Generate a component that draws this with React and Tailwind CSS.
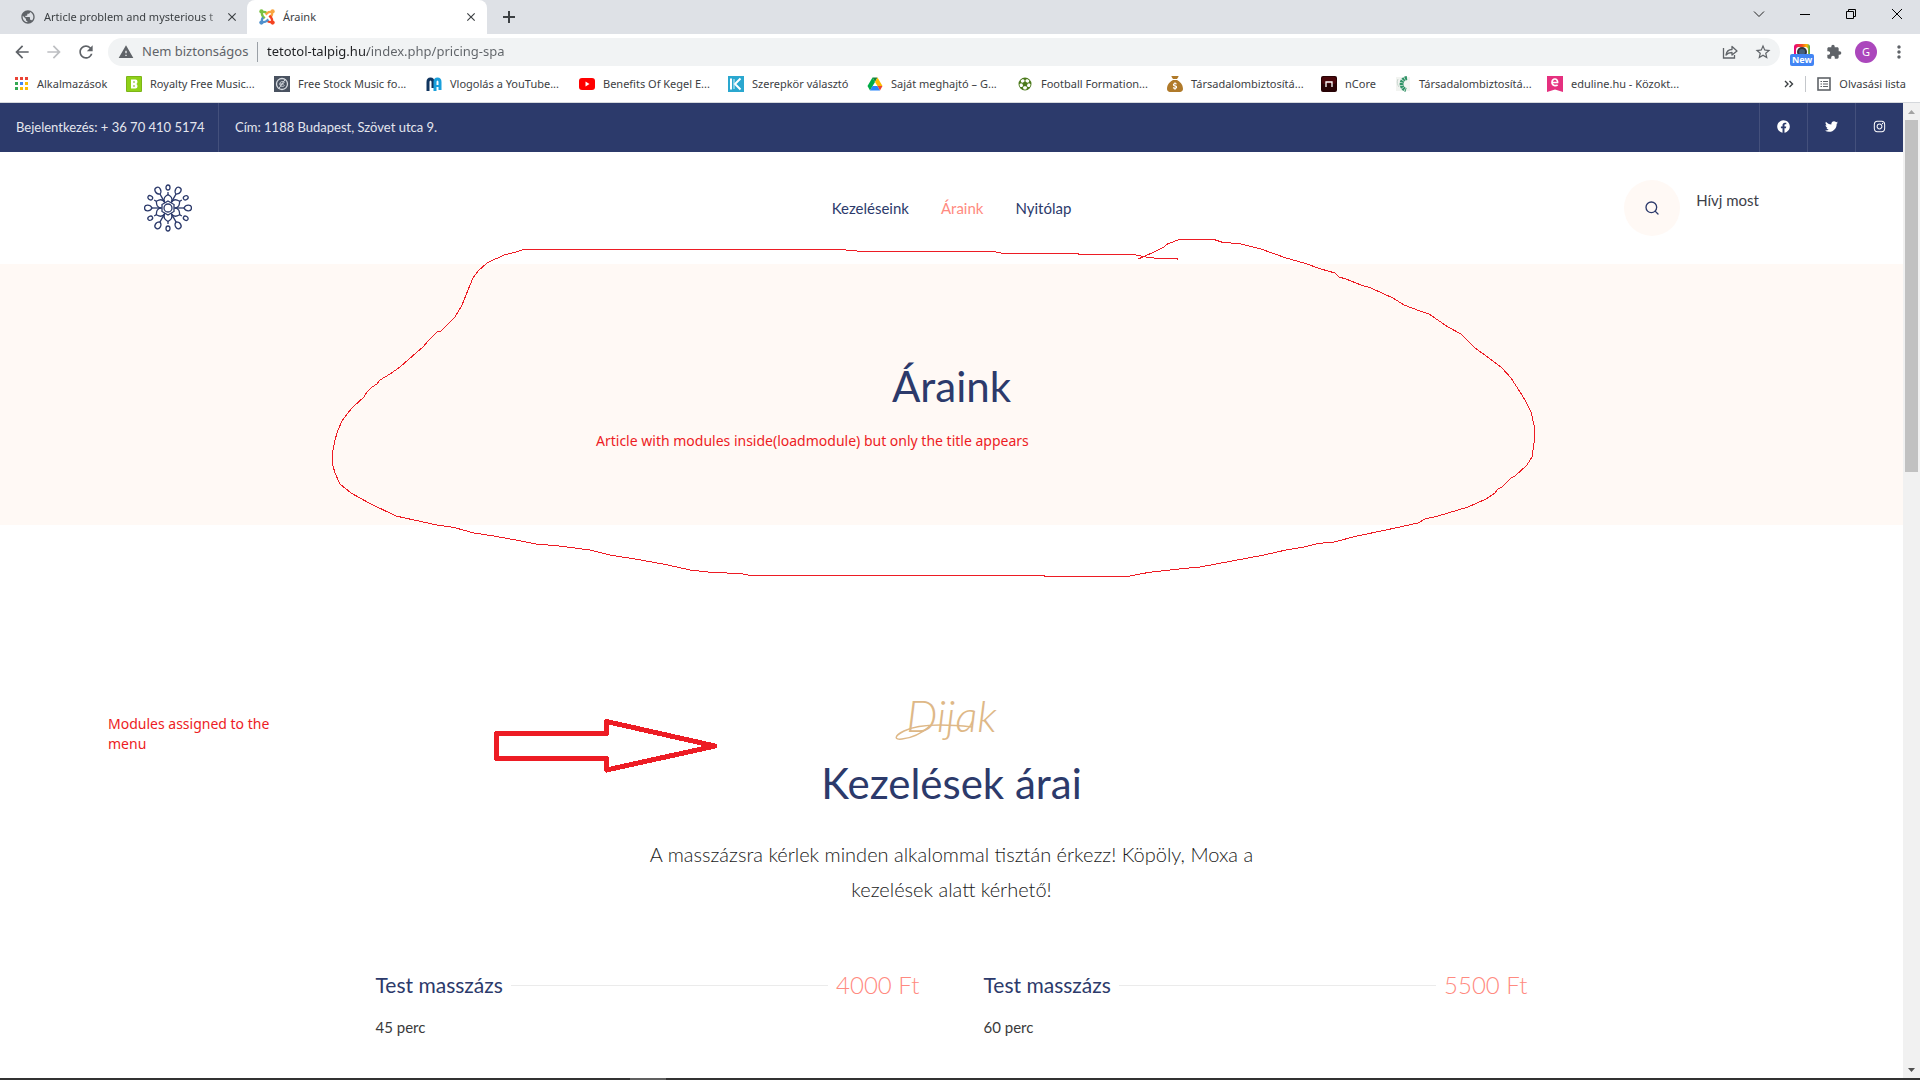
import React from "react";
import {
  MdArrowBack,
  MdArrowForward,
  MdClose,
  MdExtension,
  MdMoreVert,
  MdPublic,
  MdRefresh,
  MdStarBorder,
  MdWarning,
} from "react-icons/md";
import { FaFacebook, FaInstagram, FaTwitter } from "react-icons/fa";
import { FaSackDollar } from "react-icons/fa6";
import { PiSoccerBallFill } from "react-icons/pi";
import { Search } from "lucide-react";

const JoomlaIcon = () => (
  <svg viewBox="0 0 24 24" className="size-4" fill="none" strokeWidth="3.6">
    {[
      ["#7ac143", 0],
      ["#f9a541", 90],
      ["#f44321", 180],
      ["#5091cd", 270],
    ].map(([color, angle]) => (
      <g key={color} stroke={color} transform={`rotate(${angle} 12 12)`}>
        <circle cx="3.6" cy="3.6" r="3.2" fill={color} stroke="none" />
        <path d="M4.5 4 C4 7.500 4 9.500 6 11.500 L8.500 14" />
        <path d="M4 4.500 C7.500 4 9.500 4 11.500 6" />
      </g>
    ))}
  </svg>
);

const AppsIcon = () => (
  <svg viewBox="0 0 14 16" className="h-4 w-[14px]">
    {["#ea4335", "#ea4335", "#ea4335", "#34a853", "#4285f4", "#fbbc05", "#34a853", "#fbbc05", "#fbbc05"].map(
      (color, i) => (
        <rect key={i} x={(i % 3) * 5} y={1 + Math.floor(i / 3) * 5} width="3" height="3" fill={color} />
      )
    )}
  </svg>
);

const BensoundIcon = () => (
  <svg viewBox="0 0 16 16" className="size-4">
    <rect width="16" height="16" rx="1" fill="#7cb518" />
    <rect x="1" y="1" width="14" height="14" fill="#8fd118" />
    <path d="M5 3.500 h4.500 q2 0 2 2.200 q0 1.800 -1.200 2.300 q1.200 .5 1.200 2.300 q0 2.200 -2 2.200 H5z" fill="#fff" />
    <path d="M7 6 h2 M7 10 h2" stroke="#7cb518" strokeWidth="1.2" />
  </svg>
);

const StockMusicIcon = () => (
  <svg viewBox="0 0 16 16" className="size-4" fill="none" stroke="#d5dae0">
    <rect width="16" height="16" fill="#495260" stroke="none" />
    <circle cx="8" cy="8" r="5.5" strokeWidth="1.3" />
    <path d="M10.500 6.500 C9 4.800 5.800 5.500 5.800 8 C5.800 10.500 9 11 10.500 9.500 M11.500 3 L4.500 13 M6 8 h4" />
  </svg>
);

const VlogIcon = () => (
  <svg viewBox="0 0 16 16" className="size-4" fill="none" strokeWidth="3">
    <path d="M2 15 V6 Q2 3 4.500 3 Q7 3 7 6 V12" stroke="#10355f" />
    <path d="M9 15 V6 Q9 3 11.500 3 Q14 3 14 6 V14" stroke="#19a0dc" />
    <path d="M9 10 h5" stroke="#19a0dc" strokeWidth="2" />
  </svg>
);

const YoutubeIcon = () => (
  <svg viewBox="0 0 16 16" className="size-4">
    <rect y="2" width="16" height="12" rx="3" fill="#f00" />
    <path d="M6.500 5.500 L10.500 8 L6.500 10.500z" fill="#fff" />
  </svg>
);

const KIcon = () => (
  <svg viewBox="0 0 16 16" className="size-4" fill="none">
    <rect width="16" height="16" fill="#2aa7cf" />
    <path d="M3 2.500 V13.500 M12.500 2.500 L7 8 L12.500 13.500" stroke="#fff" strokeWidth="2" />
    <path d="M6 3 V13" stroke="#d4f0f8" />
  </svg>
);

const DriveIcon = () => (
  <svg viewBox="0 0 16 16" className="size-4">
    <path d="M5.500 1.500 H10.500 L8 6z" fill="#188038" />
    <path d="M5.500 1.500 L8 6 L3 14.500 L.5 10z" fill="#00ac47" />
    <path d="M10.500 1.500 L15.500 10 H10.500 L8 6z" fill="#ffba00" />
    <path d="M5.500 10 H10.500 L13 14.500 H3z" fill="#2684fc" />
    <path d="M10.500 10 H15.500 L13 14.500z" fill="#ea4335" />
  </svg>
);

const FootballIcon = () => (
  <span className="flex size-4 items-center justify-center rounded-full bg-white text-[#4c7a1c]">
    <PiSoccerBallFill className="size-4" />
  </span>
);

const NcoreIcon = () => (
  <svg viewBox="0 0 16 16" className="size-4" fill="none">
    <rect width="16" height="16" rx="2" fill="#280305" />
    <rect x="1" y="1" width="14" height="7" rx="2" fill="#4a070b" />
    <path d="M5 11 V6 H11 V11" stroke="#fff" strokeWidth="1.300" />
  </svg>
);

const LeafIcon = () => (
  <svg viewBox="0 0 16 16" className="size-4" fill="none">
    <rect x="1" y="1" width="14" height="14" fill="#f2f4f1" />
    <path d="M12 2 C5 3 5 12 11 14" stroke="#2f9266" strokeWidth="4" strokeDasharray="2 .6" />
    <path d="M3 3 C1.500 6 2.500 9 4 11" stroke="#c9d6cf" />
  </svg>
);

const EdulineIcon = () => (
  <svg viewBox="0 0 16 16" className="size-4" fill="none">
    <path d="M0 0 H16 V16 L8 13.500 L0 16z" fill="#e5307f" />
    <path d="M5.200 6.500 H10.600 C11 2 5 1.800 5 6.300 C5 10 9 10.300 10.600 8.800" stroke="#fff" strokeWidth="1.700" />
  </svg>
);

const ShareIcon = () => (
  <svg viewBox="0 0 16 16" className="size-4" fill="none" stroke="#5f6368" strokeWidth="1.300">
    <path d="M1.500 4 V14 H12.500 V11" />
    <path d="M4 11 C4.500 7.500 7 5.500 10 5.500 V2.500 L15 7 L10 11 V8.500 C7.500 8.500 5.500 9.200 4 11z" strokeLinejoin="round" />
  </svg>
);

const ReadingListIcon = () => (
  <svg viewBox="0 0 14 14" className="size-[14px]" fill="none" stroke="#5f6368">
    <rect x="1" y="1" width="12" height="12" strokeWidth="1.600" />
    <path d="M3.500 4.500 h1.500 M6 4.500 h5 M3.500 7 h1.500 M6 7 h5 M3.500 9.500 h1.500 M6 9.500 h5" strokeWidth="1.200" />
  </svg>
);

const CameraIcon = () => (
  <svg viewBox="0 0 16 16" className="size-4">
    <defs>
      <linearGradient id="rainbow">
        <stop offset="0" stopColor="#e6007e" />
        <stop offset=".5" stopColor="#f4511e" />
        <stop offset=".8" stopColor="#fbbc05" />
        <stop offset="1" stopColor="#34a853" />
      </linearGradient>
    </defs>
    <rect width="16" height="16" rx="3" fill="url(#rainbow)" />
    <rect x="2" y="3" width="12" height="11" rx="3" fill="#fff" />
    <circle cx="8" cy="8" r="5" fill="#30343c" />
    <circle cx="8" cy="8" r="3" fill="#46607c" />
  </svg>
);

const FlowerLogo = () => (
  <svg viewBox="0 0 48 48" className="size-12" fill="none" stroke="#2c3a6b" strokeWidth="1.300">
    {[0, 60, 120, 180, 240, 300].map((angle) => (
      <g key={angle} transform={`rotate(${angle} 24 24)`}>
        <path d="M30 24 H40" />
        <path d="M40 24 C42 20 47.500 20.500 47.500 24 C47.500 27.500 42 28 40 24z" />
        <path d="M20.500 18 C19 14 21 12.500 24 10.500 C27 12.500 29 14 27.500 18" />
        <path d="M24 10.500 V8" />
        <ellipse cx="24" cy="3.500" rx="2" ry="2.500" />
      </g>
    ))}
    <circle cx="24" cy="24" r="4" />
    <path d="M24 17 L30 20.500 V27.500 L24 31 L18 27.500 V20.500z" />
  </svg>
);

const bookmarks = [
  { label: "Alkalmazások", icon: <AppsIcon />, width: "w-[111px]" },
  { label: "Royalty Free Music...", icon: <BensoundIcon />, width: "w-[148px]" },
  { label: "Free Stock Music fo...", icon: <StockMusicIcon />, width: "w-[152px]" },
  { label: "Vlogolás a YouTube...", icon: <VlogIcon />, width: "w-[153px]" },
  { label: "Benefits Of Kegel E...", icon: <YoutubeIcon />, width: "w-[149px]" },
  { label: "Szerepkör választó", icon: <KIcon />, width: "w-[139px]" },
  { label: "Saját meghajtó – G...", icon: <DriveIcon />, width: "w-[150px]" },
  { label: "Football Formation...", icon: <FootballIcon />, width: "w-[150px]" },
  { label: "Társadalombiztosítá...", icon: <FaSackDollar className="size-4 text-[#b07a2a]" />, width: "w-[154px]" },
  { label: "nCore", icon: <NcoreIcon />, width: "w-[74px]" },
  { label: "Társadalombiztosítá...", icon: <LeafIcon />, width: "w-[152px]" },
  { label: "eduline.hu - Közokt...", icon: <EdulineIcon />, width: "w-[152px]" },
];

const TabStrip = () => (
  <div className="flex h-[34px] bg-[#dee1e6] text-[11px] text-[#3c4043]">
    <div className="flex w-[247px] items-center pl-5 pr-1">
      <MdPublic className="size-4 shrink-0 text-[#5f6368]" />
      <span className="ml-2 flex-1 whitespace-nowrap [mask-image:linear-gradient(90deg,#000_92%,transparent)]">
        Article problem and mysterious t
      </span>
      <button aria-label="Close tab" className="p-1">
        <MdClose className="size-[14px]" />
      </button>
    </div>
    <div className="flex w-60 items-center rounded-t-lg bg-white pl-3 pr-[5px]">
      <JoomlaIcon />
      <span className="ml-2 flex-1">Áraink</span>
      <button aria-label="Close tab" className="p-1">
        <MdClose className="size-[14px]" />
      </button>
    </div>
    <button aria-label="New tab" className="ml-3 w-5">
      <svg viewBox="0 0 20 20" className="size-5" stroke="#3c4043" strokeWidth="2">
        <path d="M10 4 V16 M4 10 H16" />
      </svg>
    </button>
    <div className="ml-auto flex h-7 items-center">
      <button aria-label="Search tabs" className="flex w-[46px] justify-center">
        <svg viewBox="0 0 12 12" className="size-3" fill="none" stroke="#222">
          <path d="M1 3.500 L6 8.500 L11 3.500" />
        </svg>
      </button>
      <button aria-label="Minimize" className="flex w-[46px] justify-center">
        <svg viewBox="0 0 10 10" className="size-[10px]" fill="none" stroke="#000">
          <path d="M0 5.500 H10" />
        </svg>
      </button>
      <button aria-label="Restore" className="flex w-[46px] justify-center">
        <svg viewBox="0 0 10 10" className="size-[10px]" fill="none" stroke="#000">
          <path d="M.5 2.500 H7.500 V9.500 H.5z M2.500 2.500 V.5 H9.500 V7.500 H7.500" />
        </svg>
      </button>
      <button aria-label="Close" className="flex w-[46px] justify-center">
        <svg viewBox="0 0 10 10" className="size-[10px]" fill="none" stroke="#000">
          <path d="M0 0 L10 10 M10 0 L0 10" />
        </svg>
      </button>
    </div>
  </div>
);

const Toolbar = () => (
  <div className="flex h-9 items-center bg-white pl-3 pr-[11px] text-[#5f6368]">
    <button aria-label="Back" className="mr-3">
      <MdArrowBack className="size-5" />
    </button>
    <button aria-label="Forward" className="mr-3 text-[#bdbfc2]">
      <MdArrowForward className="size-5" />
    </button>
    <button aria-label="Reload" className="mr-3">
      <MdRefresh className="size-5" />
    </button>
    <div className="flex h-7 flex-1 items-center rounded-full bg-[#f1f3f4] pl-[10px] pr-2 text-[13px]">
      <MdWarning className="size-4" />
      <label htmlFor="address" className="ml-2 w-[116px] border-r border-[#9aa0a6]">
        Nem biztonságos
      </label>
      <input
        id="address"
        type="text"
        defaultValue="tetotol-talpig.hu/index.php/pricing-spa"
        className="ml-[9px] flex-1 bg-[linear-gradient(90deg,#202124_101px,#5f6368_101px)] bg-clip-text text-transparent outline-none"
      />
      <button aria-label="Share" className="mr-4">
        <ShareIcon />
      </button>
      <button aria-label="Bookmark">
        <MdStarBorder className="size-[18px]" />
      </button>
    </div>
    <div className="ml-[10px] flex items-center">
      <button aria-label="Screenshot extension" className="relative flex w-6 justify-center">
        <CameraIcon />
        <span className="absolute left-0 top-[10px] h-3 w-6 rounded-xs bg-[#4285f4] text-center text-[9px] font-bold leading-3 text-white">
          New
        </span>
      </button>
      <button aria-label="Extensions" className="ml-3">
        <MdExtension className="size-4" />
      </button>
      <button aria-label="Profile" className="ml-[13px] size-[22px] rounded-full bg-[#ab47bc] text-[11px] leading-[22px] text-white">
        G
      </button>
      <button aria-label="Menu" className="ml-3">
        <MdMoreVert className="size-5" />
      </button>
    </div>
  </div>
);

const BookmarksBar = () => (
  <div className="flex h-[33px] items-center border-b border-[#d5d8dc] bg-white pb-1 pl-[15px] pr-[14px] text-[11px] text-[#3c4043]">
    {bookmarks.map((item, i) => (
      <a key={i} href="#" className={`flex shrink-0 items-center gap-2 whitespace-nowrap ${item.width}`}>
        {item.icon}
        {item.label}
      </a>
    ))}
    <button aria-label="More bookmarks" className="ml-auto">
      <svg viewBox="0 0 10 8" className="h-2 w-[10px]" fill="none" stroke="#3c4043" strokeWidth="1.400">
        <path d="M1 1 L4 4 L1 7 M5.500 1 L8.500 4 L5.500 7" />
      </svg>
    </button>
    <span className="mx-[11px] h-4 w-px bg-[#c4c7cb]" />
    <button className="flex items-center gap-2 whitespace-nowrap">
      <ReadingListIcon />
      Olvasási lista
    </button>
  </div>
);

const TopBar = () => (
  <div className="flex h-[49px] items-stretch bg-[#2c3a6b] text-[13px] text-[#e4e6ee]">
    <div className="flex w-[219px] items-center whitespace-nowrap border-r border-[#44507c] pl-4">
      Bejelentkezés: + 36 70 410 5174
    </div>
    <div className="flex items-center pl-4">Cím: 1188 Budapest, Szövet utca 9.</div>
    <div className="ml-auto flex text-white">
      {[FaFacebook, FaTwitter, FaInstagram].map((Icon, i) => (
        <a
          key={i}
          href="#"
          aria-label={["Facebook", "Twitter", "Instagram"][i]}
          className="flex w-12 items-center justify-center border-l border-[#44507c] pb-[2px]"
        >
          <Icon className="size-[13px]" />
        </a>
      ))}
    </div>
  </div>
);

const Header = () => (
  <header className="grid h-28 grid-cols-[1fr_auto_1fr] items-center bg-white px-36 text-[15px] text-[#2c3a6b]">
    <a href="#" aria-label="Home" className="w-12">
      <FlowerLogo />
    </a>
    <nav className="flex gap-8">
      <a href="#">Kezeléseink</a>
      <a href="#" className="text-[#ff8a80]">
        Áraink
      </a>
      <a href="#">Nyitólap</a>
    </nav>
    <div className="flex items-center justify-end gap-4">
      <button aria-label="Search" className="flex size-14 items-center justify-center rounded-full bg-[#fff9f5]">
        <Search className="size-4" />
      </button>
      <a href="#" className="pb-4 text-[#3d4048]">
        Hívj most
      </a>
    </div>
  </header>
);

const PriceItem = ({ title, price, length }) => (
  <div>
    <div className="flex items-center leading-8">
      <h3 className="text-[21px] text-[#2c3a6b]">{title}</h3>
      <span className="mx-2 h-px flex-1 bg-[#ebebeb]" />
      <span className="text-2xl font-light text-[#ff8a80]">{price}</span>
    </div>
    <p className="mt-3 text-[15px] leading-7 text-[#3a3a3a]">{length}</p>
  </div>
);

const Scrollbar = () => (
  <div className="flex w-[17px] shrink-0 flex-col items-center bg-[#f1f1f1]">
    <svg viewBox="0 0 17 17" className="size-[17px]">
      <path d="M5 11 L8.500 7 L12 11z" fill="#a3a3a3" />
    </svg>
    <div className="h-[352px] w-[13px] bg-[#c1c1c1]" />
    <svg viewBox="0 0 17 17" className="mt-auto size-[17px]">
      <path d="M5 7 L8.500 11 L12 7z" fill="#505050" />
    </svg>
  </div>
);

// hand-drawn notes lying over the page
const Annotations = () => (
  <div className="pointer-events-none absolute inset-0 overflow-hidden text-sm leading-5 text-[#ed1c24]">
    <svg className="absolute inset-0 size-full" fill="none" stroke="#ed1c24" shapeRendering="crispEdges">
      <path
        strokeWidth="1"
        d="M1177 260 V258.500 H1159 L1149 257.500 L1134 254.700 L1078 254.300 V253.500 H1003 L996 252 L862 251.500 L841 249.500 H524 L516 252 L504 255 L498 258 L495 259 L487 263 L478 271 L473 278 L468 290 L462 305 L455 317 L441 331 L437 332 L429 340 L423 347 L416 353 L400 367 L390 374 L380 380 L377 384 L372 387 L367 392 L364 397 L353 407 L347 414 L342 421 L338 430 L335 440 L332.500 453 V464 L335 473 L340 484 L351 493 L369 503 L396 516 L414 520 L437 525 L454 527.500 L474 533 L494 536 L521 541 L536 544 L559 546 L590 550 L610 555 L641 560 L668 565 L690 570 L713 572.500 L740 573.500 L751 575.500 H1044 V576.500 H1127 L1138 574.500 L1148 572.500 L1179 569 L1200 567 L1232 561 L1264 555 L1286 550 L1304 547 L1318 543.500 L1334 542 L1357 536 L1386 530 L1418 523 L1425 519 L1438 516 L1468 507 L1486 499 L1495 493 L1498 489 L1502 487 L1511 478 L1515 476 L1527 465 L1532 457 L1534.500 440 V427 L1531 412 L1525 400 L1520 392 L1511 378 L1502 368 L1489 358 L1475 348 L1461 334 L1448 327 L1429 314 L1420 311 L1404 305 L1393 298 L1384 294 L1371 288 L1361 285 L1346 279 L1339 277 L1335 273 L1321 269 L1304 263 L1286 258 L1261 249 L1239 243.500 L1223 242.500 L1214 239.500 H1179 L1173 242 L1168 243.500 L1164 247 L1154 252 L1143 257 L1138 259"
      />
      <path
        strokeWidth="5"
        strokeLinejoin="round"
        d="M496.500 733.500 H606.500 V721.500 L715 746 L606.500 770 V758.500 H496.500z"
      />
    </svg>
    <p className="absolute left-[596px] top-[431px] whitespace-nowrap">
      Article with modules inside(loadmodule) but only the title appears
    </p>
    <p className="absolute left-[108px] top-[714px] w-[180px]">Modules assigned to the menu</p>
  </div>
);

const App = () => {
  return (
    <div className="relative flex h-screen flex-col overflow-hidden bg-white font-['Noto_Sans',sans-serif]">
      <TabStrip />
      <Toolbar />
      <BookmarksBar />

      <div className="flex min-h-0 flex-1">
        <main className="min-w-0 flex-1 overflow-hidden bg-white font-['Lato',sans-serif]">
          <TopBar />
          <Header />
          <section className="bg-[#fff9f5] pb-[113px] pt-24 text-center">
            <h1 className="text-[42px] leading-[52px] text-[#2c3a6b]">Áraink</h1>
          </section>

          <section className="mx-auto max-w-[1152px] pt-40">
            <div className="mx-auto max-w-[640px] text-center">
              <p className="text-[44px] font-light italic leading-[60px] text-[#deb887]">
                <span className="relative inline-block">
                  Dijak
                  {/* flourish under the word */}
                  <svg
                    viewBox="0 0 80 18"
                    className="absolute -left-3 bottom-1 h-[18px] w-20"
                    fill="none"
                    stroke="#deb887"
                    strokeWidth="1.500"
                  >
                    <path d="M78 4 C50 1 24 1 10 8 C0 13 0 17 8 16 C18 15 28 10 36 3" />
                  </svg>
                </span>
              </p>
              <h2 className="mt-2 text-[42px] leading-[60px] text-[#2c3a6b]">Kezelések árai</h2>
              <p className="mt-6 text-[20px] font-light leading-[35px] text-[#1a1a1a]">
                A masszázsra kérlek minden alkalommal tisztán érkezz! Köpöly, Moxa a kezelések alatt kérhető!
              </p>
            </div>
            <div className="mt-[62px] grid grid-cols-2 gap-16">
              <PriceItem title="Test masszázs" price="4000 Ft" length="45 perc" />
              <PriceItem title="Test masszázs" price="5500 Ft" length="60 perc" />
            </div>
          </section>
        </main>
        <Scrollbar />
      </div>

      <div className="h-[2px] bg-[#333333]">
        <div className="ml-[630px] h-full w-9 bg-[#606060]" />
      </div>

      <Annotations />
    </div>
  );
};

export default App;
